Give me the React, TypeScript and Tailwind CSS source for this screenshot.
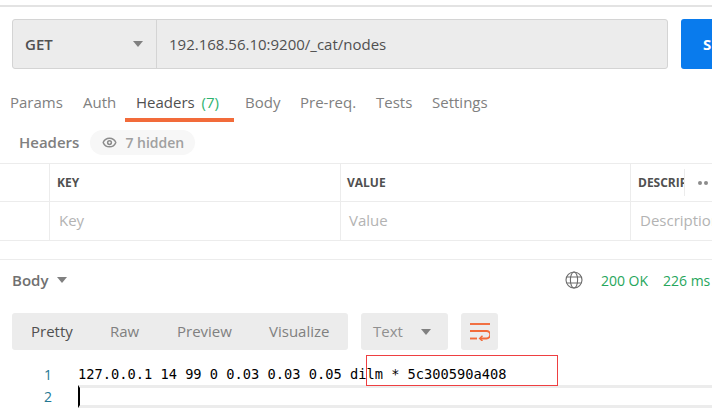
import { Eye } from "lucide-react";

const sans = "font-['Open_Sans',sans-serif]";

function Caret({ className }: { className: string }) {
  return (
    <svg viewBox="0 0 10 6" className={className} fill="currentColor">
      <path d="M0 0h10L5 6z" />
    </svg>
  );
}

function Tab({ label, className = "" }: { label: string; className?: string }) {
  return <div className={`text-[15px] text-[#808080] ${className}`}>{label}</div>;
}

function GlobeIcon() {
  return (
    <svg viewBox="0 0 18 18" className="w-[18px] h-[18px]" fill="none" stroke="#6b6b6b" strokeWidth="1.1">
      <circle cx="9" cy="9" r="8" />
      <ellipse cx="9" cy="9" rx="3.6" ry="8" />
      <path d="M1.8 6h14.4M1.8 12h14.4" />
    </svg>
  );
}

function WrapIcon() {
  return (
    <svg viewBox="0 0 20 18" className="w-[20px] h-[18px]" fill="none" stroke="#f26b3a" strokeWidth="1.9">
      <path d="M0 1h20" />
      <path d="M0 8h16.5a3.6 3.6 0 0 1 0 7.5H10" />
      <path d="M0 15.5h7" />
      <path d="M12.5 12.8l-2.8 2.7 2.8 2.5" strokeWidth="1.5" />
    </svg>
  );
}

export default function App() {
  return (
    <div className={`relative w-[712px] h-[416px] overflow-hidden bg-white ${sans}`}>
      <div className="h-[7px] pt-[5px]">
        <div className="h-[2px] bg-[#e3e3e3]" />
      </div>

      {/* url bar */}
      <div className="flex mt-[12px] ml-[12px] h-[50px] w-[729px]">
        <div className="flex w-[656px] shrink-0 rounded-[3px] border border-[#d4d4d4] bg-[#ececec]">
          <div className="flex w-[144px] items-center justify-between border-r border-[#d4d4d4] pl-[12px] pr-[13px]">
            <span className="text-[15px] font-semibold text-[#505050]">GET</span>
            <Caret className="w-[10px] h-[6px] text-[#808080]" />
          </div>
          <div className="flex items-center pl-[12px] text-[15px] text-[#505050]">192.168.56.10:9200/_cat/nodes</div>
        </div>
        <div className="ml-[13px] flex w-[60px] shrink-0 items-center rounded-[3px] bg-[#097bed] pl-[22px] text-[15px] font-bold text-white">
          S
        </div>
      </div>

      {/* request tabs */}
      <div className="mt-[21px] flex h-[33px] items-start pl-[10px] pt-[1px]">
        <Tab label="Params" className="w-[73px]" />
        <Tab label="Auth" className="w-[42px]" />
        <div className="relative w-[120px] pl-[11px] text-[15px] text-[#505050] h-[31px]">
          Headers <span className="ml-[3px] text-[#2fb36f]">(7)</span>
          <div className="absolute left-0 top-[27px] h-[4px] w-[109px] bg-[#f26b3a]" />
        </div>
        <Tab label="Body" className="w-[55px]" />
        <Tab label="Pre-req." className="w-[76px]" />
        <Tab label="Tests" className="w-[56px]" />
        <Tab label="Settings" />
      </div>

      {/* headers label */}
      <div className="mt-[7px] flex h-[25px] items-center pl-[19px]">
        <span className="text-[15px] font-semibold text-[#808080]">Headers</span>
        <div className="ml-[11px] flex h-[25px] w-[105px] items-center rounded-full bg-[#f7f7f7] pl-[12px] text-[14px] font-semibold text-[#a0a0a0]">
          <Eye size={15} strokeWidth={2.4} className="text-[#8c8c8c]" />
          <span className="ml-[8px]">7 hidden</span>
        </div>
      </div>

      {/* table */}
      <div className="mt-[8px] border-t border-[#ececec]">
        <div className="flex h-[38px] border-b border-[#ececec] text-[12px] font-bold text-[#505050]">
          <div className="w-[50px] shrink-0 border-r border-[#ececec]" />
          <div className="flex w-[291px] shrink-0 items-center border-r border-[#ececec] pl-[7px]">KEY</div>
          <div className="flex w-[290px] shrink-0 items-center border-r border-[#ececec] pl-[6px]">VALUE</div>
          <div className="flex items-center pl-[7px]">
            <span className="flex h-[27px] w-[47px] items-center overflow-hidden border-r border-[#ececec] whitespace-nowrap">DESCRIPTION</span>
            <span className="ml-[13px] flex gap-[2px]">
              <i className="h-[4px] w-[4px] rounded-full bg-[#8c8c8c]" />
              <i className="h-[4px] w-[4px] rounded-full bg-[#8c8c8c]" />
            </span>
          </div>
        </div>
        <div className="flex h-[39px] border-b border-[#ececec] text-[15px] text-[#b3b3b3]">
          <div className="w-[50px] shrink-0 border-r border-[#ececec]" />
          <div className="flex w-[291px] shrink-0 items-center border-r border-[#ececec] pb-[2px] pl-[9px]">Key</div>
          <div className="flex w-[290px] shrink-0 items-center border-r border-[#ececec] pb-[2px] pl-[8px]">Value</div>
          <div className="flex items-center pb-[2px] pl-[9px] whitespace-nowrap">Description</div>
        </div>
      </div>

      {/* response */}
      <div className="mt-[18px] flex h-[43px] items-center border-t border-[#ececec] pb-[2px] pl-[12px]">
        <span className="text-[15px] font-semibold text-[#707070]">Body</span>
        <Caret className="ml-[9px] w-[10px] h-[6px] text-[#808080]" />
        <div className="ml-auto flex items-center text-[14px] text-[#26a65b] whitespace-nowrap">
          <GlobeIcon />
          <span className="ml-[18px]">200 OK</span>
          <span className="ml-[15px] w-[49px]">226 ms</span>
        </div>
      </div>

      <div className="mt-[11px] ml-[12px] flex h-[37px] items-stretch">
        <div className="flex w-[336px] items-center rounded-[3px] bg-[#ececec] pl-[19px] text-[15px] text-[#808080]">
          <span className="w-[79px] text-[#505050]">Pretty</span>
          <span className="w-[67px]">Raw</span>
          <span className="w-[92px]">Preview</span>
          <span>Visualize</span>
        </div>
        <div className="ml-[13px] flex w-[87px] items-center justify-between rounded-[3px] bg-[#ececec] pl-[12px] pr-[17px] text-[15px] text-[#909090]">
          Text
          <Caret className="w-[10px] h-[6px] text-[#808080]" />
        </div>
        <div className="ml-[13px] flex w-[37px] items-center justify-center rounded-[3px] bg-[#ececec]">
          <WrapIcon />
        </div>
      </div>

      {/* code */}
      <div className="mt-[12px] font-['DejaVu_Sans_Mono',monospace] text-[13.7px] text-[#000]">
        <div className="flex h-[23px] items-center pt-[1px]">
          <span className={`w-[78px] pr-[26px] text-right text-[14px] text-[#237893] ${sans}`}>1</span>
          <span className="whitespace-pre">127.0.0.1 14 99 0 0.03 0.03 0.05 dilm * 5c300590a408</span>
        </div>
        <div className="flex h-[23px] items-stretch">
          <span className={`flex w-[78px] items-center justify-end pr-[26px] text-[14px] text-[#237893] ${sans}`}>2</span>
          <span className="flex-1 border-y-[3px] border-l-[2px] border-[#ececec] border-l-black" />
        </div>
      </div>

      <div className="absolute left-[366px] top-[355px] h-[31px] w-[192px] border border-[#ee3f41]" />
    </div>
  );
}
